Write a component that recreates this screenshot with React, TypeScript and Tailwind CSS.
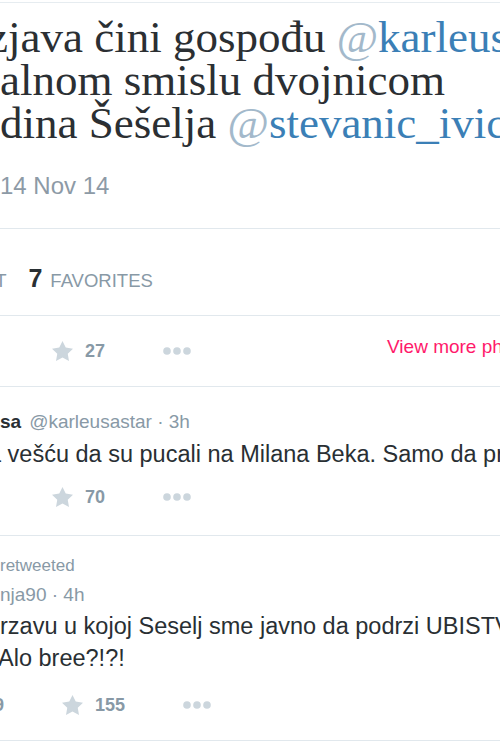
import React from "react";

function Mention({ name }: { name: string }) {
  return (
    <span>
      <span className="text-[#a3b9cb]">@</span>
      <span className="text-[#3b7fb6]">{name}</span>
    </span>
  );
}

function Star() {
  return (
    <svg width="21" height="22" viewBox="2 1.5 20 20" className="shrink-0">
      <path
        d="M12 2l3.09 6.26L22 9.27l-5 4.87 1.18 6.88L12 17.77l-6.18 3.25L7 14.14 2 9.27l6.91-1.01L12 2z"
        fill="#ccd6dd"
      />
    </svg>
  );
}

function Dots() {
  return (
    <svg width="28" height="8" viewBox="0 0 28 8" className="shrink-0">
      <circle cx="4" cy="4" r="3.8" fill="#ccd6dd" />
      <circle cx="14" cy="4" r="3.8" fill="#ccd6dd" />
      <circle cx="24" cy="4" r="3.8" fill="#ccd6dd" />
    </svg>
  );
}

function Count({ n }: { n: string }) {
  return <span className="ml-[12px] text-[18px] font-bold text-[#8899a6] leading-[22px]">{n}</span>;
}

export default function App() {
  return (
    <div className="w-[500px] h-[750px] overflow-hidden bg-white font-['Liberation_Sans',Arial,sans-serif] text-[#292f33]">
      <div className="mt-[2px] border-t border-[#e6ecf0]" />

      {/* Main tweet */}
      <div className="pt-[13px] pb-[28px] border-b border-[#e1e8ed]">
        <div className="font-['Liberation_Serif','Times_New_Roman',serif] text-[45px] leading-[43px] whitespace-nowrap text-[#2b2f33]">
          <div className="ml-[-27px]">
            Izjava čini gospođu <Mention name="karleusastar" />
          </div>
          <div>alnom smislu dvojnicom</div>
          <div>
            dina Šešelja <Mention name="stevanic_ivica" />
          </div>
        </div>
        <div className="mt-[27px] text-[24px] leading-[28px] text-[#8d9aa6]">14 Nov 14</div>
      </div>

      {/* Stats */}
      <div className="h-[87px] pt-[35px] border-b border-[#e1e8ed] flex items-baseline whitespace-nowrap leading-[28px]">
        <span className="ml-[-84px] text-[18.5px] text-[#8899a6]">RETWEET</span>
        <span className="ml-[22px] text-[25px] font-bold text-[#292f33]">7</span>
        <span className="ml-[8px] text-[18.5px] text-[#8899a6]">FAVORITES</span>
      </div>

      {/* Actions main */}
      <div className="h-[71px] border-b border-[#e1e8ed] flex items-center whitespace-nowrap">
        <div className="ml-[52px] flex items-center">
          <Star />
          <Count n="27" />
          <span className="ml-[58px] flex"><Dots /></span>
        </div>
        <span className="ml-[196px] mb-[8px] text-[19px] leading-[22px] text-[#ff1a6b] shrink-0">View more photos</span>
      </div>

      {/* Tweet 2 */}
      <div className="h-[149px] pt-[23px] border-b border-[#e1e8ed] whitespace-nowrap">
        <div className="text-[19px] leading-[24px] flex">
          <span className="font-bold text-[#292f33]">sa</span>
          <span className="ml-[8px] text-[#8899a6]">@karleusastar · 3h</span>
        </div>
        <div className="mt-[4px] ml-[-12px] text-[23.5px] leading-[32px] text-[#292f33]">
          a vešću da su pucali na Milana Beka. Samo da pročitam
        </div>
        <div className="mt-[7px] h-[40px] flex items-center">
          <div className="ml-[52px] flex items-center">
            <Star />
            <Count n="70" />
            <span className="ml-[58px] flex"><Dots /></span>
          </div>
        </div>
      </div>

      {/* Tweet 3 */}
      <div className="h-[205px] pt-[20px] border-b border-[#e1e8ed] whitespace-nowrap">
        <div className="text-[17px] leading-[20px] text-[#8899a6]">retweeted</div>
        <div className="mt-[7px] text-[19px] leading-[24px] text-[#8899a6]">nja90 · 4h</div>
        <div className="mt-[3px] text-[23.5px] leading-[32px] text-[#292f33]">
          <div>rzavu u kojoj Seselj sme javno da podrzi UBISTVO</div>
          <div className="ml-[-2px]">Alo bree?!?!</div>
        </div>
        <div className="mt-[11px] h-[40px] flex items-center">
          <span className="ml-[-16px] text-[18px] font-bold text-[#8899a6] leading-[22px]">29</span>
          <div className="ml-[58px] flex items-center">
            <Star />
            <Count n="155" />
            <span className="ml-[58px] flex"><Dots /></span>
          </div>
        </div>
      </div>
    </div>
  );
}
